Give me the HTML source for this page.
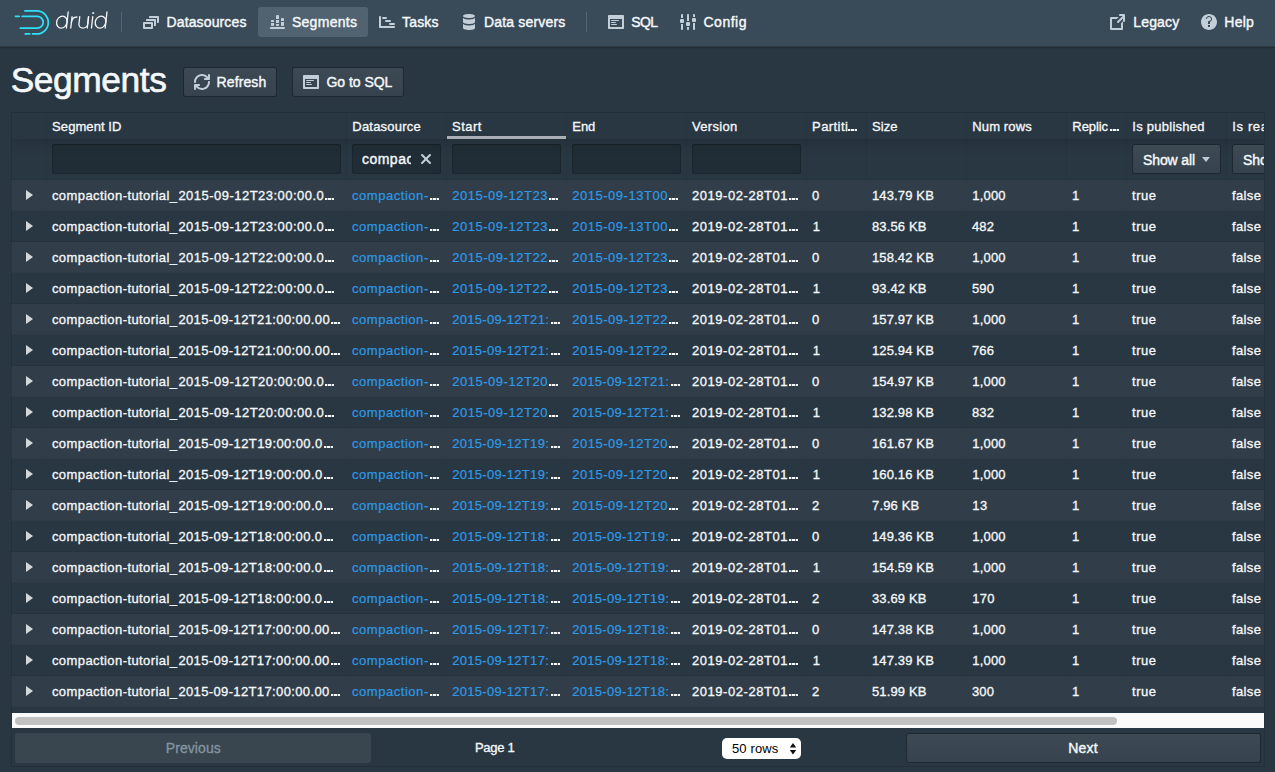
<!DOCTYPE html>
<html lang="en">
<head>
<meta charset="utf-8">
<title>Apache Druid</title>
<style>
*{box-sizing:border-box;margin:0;padding:0}
html,body{width:1275px;height:772px;overflow:hidden;background:#293742;font-family:"Liberation Sans",sans-serif;color:#f5f8fa;font-size:14px}
.abs{position:absolute}
svg{display:block}
.w{-webkit-text-stroke:0.32px #f5f8fa}
.w14{-webkit-text-stroke:.4px #f5f8fa}
.wt{-webkit-text-stroke:.65px #f5f8fa}
.wl{-webkit-text-stroke:.22px #2e99e6}
#nav{position:absolute;left:0;top:0;width:1275px;height:46px;background:#394b59}
#nsh{position:absolute;left:0;top:46px;width:1275px;height:4px;background:linear-gradient(to bottom,#2c3a46 0,#2c3a46 25%,#222d36 25%,#222d36 50%,#26333d 50%,#26333d 75%,#28363f 75%)}
.nb{position:absolute;top:7px;height:30px;border-radius:3px}
.nb.on{background:rgba(138,155,168,.3)}
.vdiv{position:absolute;top:12px;width:1px;height:20px;background:rgba(255,255,255,.15)}
.btn{position:absolute;top:68px;height:28px;border-radius:2px;background-image:linear-gradient(to bottom,#3d4a54,#36434e);box-shadow:0 0 0 1px rgba(16,22,26,.45)}
#tbl{position:absolute;left:11px;top:112px;width:1254px;height:655px;overflow:hidden}
#tbl .bd{position:absolute;left:0;top:0;width:1254px;height:655px;border:1px solid rgba(0,0,0,.12);border-right-color:#25313b;pointer-events:none}
.hd{position:absolute;left:0;top:0;width:1254px;height:27px;box-shadow:0 2px 15px 0 rgba(0,0,0,.15)}
.ft{position:absolute;left:0;top:27px;width:1254px;height:41px;border-bottom:1px solid rgba(0,0,0,.05)}
.row{position:absolute;left:0;width:1254px;height:31px;border-bottom:1px solid rgba(0,0,0,.055)}
.row.odd{background:rgba(255,255,255,.04)}
.cd{position:absolute;top:0;width:1px;background:rgba(0,0,0,.05)}
.inp{position:absolute;top:32px;height:30px;border-radius:3px;background:rgba(16,22,26,.3);box-shadow:inset 0 0 0 1px rgba(16,22,26,.3),inset 0 1px 1px rgba(16,22,26,.4)}
.sel{position:absolute;top:33px;height:28px;border-radius:2px;background-image:linear-gradient(to bottom,#3d4a54,#36434e);box-shadow:0 0 0 1px rgba(16,22,26,.45)}
.e{position:absolute;width:9.2px;height:2px;background:linear-gradient(90deg,#f5f8fa 0,#f5f8fa 2.3px,rgba(245,248,250,.35) 2.3px,rgba(245,248,250,.35) 3.3px,#f5f8fa 3.3px,#f5f8fa 5.6px,rgba(245,248,250,.35) 5.6px,rgba(245,248,250,.35) 6.6px,#f5f8fa 6.6px)}
.tri{position:absolute;left:15px;width:0;height:0;border-top:5px solid transparent;border-bottom:5px solid transparent;border-left:7px solid rgba(255,255,255,.8)}
</style>
</head>
<body>

<div id="nav">
<svg class="abs" style="left:12px;top:6px" width="40" height="32" viewBox="12 6 40 32" fill="none" stroke="#2de0f5" stroke-width="1.75" stroke-linecap="round">
<path d="M25 10.900H36.800A11.500 11.500 0 0 1 36.800 33.900H32.500"/>
<path d="M25.300 33.900H29.600"/>
<path d="M22.200 16.300H37.300A5.900 5.900 0 0 1 37.300 28.100H20.300"/>
<path d="M15.500 16.300H19.200"/>
</svg>
<svg class="abs" style="left:52px;top:6px" width="60" height="30" viewBox="52 6 60 30" fill="none" stroke="#fff" stroke-width="1.3" stroke-linecap="round" opacity=".95">
<g transform="translate(3.09,0) skewX(-6.3)">
<ellipse cx="61.2" cy="22.1" rx="5.2" ry="6"/><path d="M66.4 12V28"/>
<path d="M70.8 16.600V28"/><path d="M70.8 22.500C70.8 19 72.8 17 75.7 17"/>
<path d="M78.500 16.600V23.700A4.400 4.400 0 0 0 87.300 23.700V16.600"/><path d="M87.300 16.600V28"/>
<path d="M91.500 16.600V28"/><circle cx="91.450" cy="13.100" r=".8" fill="#fff" stroke-width=".4"/>
<ellipse cx="99.900" cy="22.100" rx="5.300" ry="6"/><path d="M105.200 12V28"/>
</g></svg>
<div class="vdiv" style="left:121px"></div>
<div class="nb" style="left:133px;width:124px"></div>
<svg class="abs" style="left:143px;top:16px" width="16" height="16" viewBox="0 0 16 16" fill="#c3cfd8"><path d="M9 6H1c-.55 0-1 .45-1 1v5c0 .55.45 1 1 1h8c.55 0 1-.45 1-1V7c0-.55-.45-1-1-1zM8 11H2V8h6v3z"/><path d="M12 3H4c-.55 0-1 .45-1 1v1h8v5h1c.55 0 1-.45 1-1V4c0-.55-.45-1-1-1z"/><path d="M15 0H7c-.55 0-1 .45-1 1v1h8v5h1c.55 0 1-.45 1-1V1c0-.55-.45-1-1-1z"/></svg>
<span class="abs w14" style="left:166.50px;top:7px;line-height:30px;height:30px;font-size:14px;color:#f5f8fa;letter-spacing:0.130px;white-space:pre;">Datasources</span>
<div class="nb on" style="left:258px;width:110px"></div>
<svg class="abs" style="left:269px;top:14px" width="16" height="16" viewBox="0 0 16 16" fill="#c3cfd8"><rect x=".8" y="13" width="15.200" height="2" rx="1"/><path d="M2 7c0-.55.45-1 1-1h1c.55 0 1 .45 1 1v1H2z"/><path d="M2 9h3v2c0 .55-.45 1-1 1H3c-.55 0-1-.45-1-1z"/><path d="M7 2c0-.55.45-1 1-1h1c.55 0 1 .45 1 1v3H7z"/><rect x="7" y="6" width="3" height="3"/><path d="M7 10h3v1c0 .55-.45 1-1 1H8c-.55 0-1-.45-1-1z"/><path d="M12 5c0-.55.45-1 1-1h1c.55 0 1 .45 1 1v2h-3z"/><path d="M12 8h3v3c0 .55-.45 1-1 1h-1c-.55 0-1-.45-1-1z"/></svg>
<span class="abs w14" style="left:291.90px;top:7px;line-height:30px;height:30px;font-size:14px;color:#f5f8fa;letter-spacing:0.300px;white-space:pre;">Segments</span>
<div class="nb" style="left:369px;width:80px"></div>
<svg class="abs" style="left:379px;top:14px" width="16" height="16" viewBox="0 0 16 16" fill="#c3cfd8"><path d="M1 2c-.55 0-1 .45-1 1v10c0 .55.45 1 1 1h14c.55 0 1-.45 1-1s-.45-1-1-1H2V3c0-.55-.45-1-1-1z"/><rect x="3" y="3" width="5" height="2" rx="1"/><rect x="6" y="6" width="6" height="2" rx="1"/><rect x="10" y="9" width="6" height="2" rx="1"/></svg>
<span class="abs w14" style="left:402.10px;top:7px;line-height:30px;height:30px;font-size:14px;color:#f5f8fa;letter-spacing:0.125px;white-space:pre;">Tasks</span>
<div class="nb" style="left:450px;width:125px"></div>
<svg class="abs" style="left:461px;top:14px" width="16" height="16" viewBox="0 0 16 16" fill="#c3cfd8"><path d="M8 4c3.310 0 6-.9 6-2s-2.690-2-6-2C4.680 0 2 .9 2 2s2.680 2 6 2zm-6-.48V8c0 1.100 2.690 2 6 2s6-.9 6-2V3.520c0 1.100-2.690 2-6 2s-6-.9-6-2zm0 6V14c0 1.100 2.690 2 6 2s6-.9 6-2V9.520c0 1.100-2.690 2-6 2s-6-.9-6-2z"/></svg>
<span class="abs w14" style="left:483.90px;top:7px;line-height:30px;height:30px;font-size:14px;color:#f5f8fa;letter-spacing:0.191px;white-space:pre;">Data servers</span>
<div class="vdiv" style="left:586px"></div>
<div class="nb" style="left:598px;width:70px"></div>
<svg class="abs" style="left:608px;top:14px" width="16" height="16" viewBox="0 0 16 16" fill="#c3cfd8"><path d="M3.500 7h7c.28 0 .5-.22.5-.5s-.22-.5-.5-.5h-7c-.28 0-.5.22-.5.5s.22.5.5.5zM15 1H1c-.55 0-1 .45-1 1v12c0 .55.45 1 1 1h14c.55 0 1-.45 1-1V2c0-.55-.45-1-1-1zm-1 12H2V5h12v8zM3.500 9h4c.28 0 .5-.22.5-.5S7.780 8 7.500 8h-4c-.28 0-.5.22-.5.5s.22.5.5.5zm0 2h5c.28 0 .5-.22.5-.5s-.22-.5-.5-.5h-5c-.28 0-.5.22-.5.5s.22.5.5.5z" fill-rule="evenodd"/></svg>
<span class="abs w14" style="left:631.30px;top:7px;line-height:30px;height:30px;font-size:14px;color:#f5f8fa;letter-spacing:-0.650px;white-space:pre;">SQL</span>
<div class="nb" style="left:670px;width:86px"></div>
<svg class="abs" style="left:680px;top:14px" width="16" height="16" viewBox="0 0 16 16" fill="#c3cfd8"><path d="M1 1c0-.55.45-1 1-1s1 .45 1 1v3H1z"/><rect x="0" y="5" width="4" height="4" rx="1"/><path d="M1 10h2v5c0 .55-.45 1-1 1s-1-.45-1-1z"/><path d="M7 1c0-.55.45-1 1-1s1 .45 1 1v6H7z"/><rect x="6" y="8" width="4" height="4" rx="1"/><path d="M7 13h2v2c0 .55-.45 1-1 1s-1-.45-1-1z"/><path d="M13 1c0-.55.45-1 1-1s1 .45 1 1v2h-2z"/><rect x="12" y="4" width="4" height="4" rx="1"/><path d="M13 9h2v6c0 .55-.45 1-1 1s-1-.45-1-1z"/></svg>
<span class="abs w14" style="left:703.50px;top:7px;line-height:30px;height:30px;font-size:14px;color:#f5f8fa;letter-spacing:0.500px;white-space:pre;">Config</span>
<div class="nb" style="left:1100px;width:89px"></div>
<svg class="abs" style="left:1110px;top:14px" width="16" height="16" viewBox="0 0 16 16" fill="#c3cfd8"><path d="M10.990 13.990h-9v-9h4.760l2-2H.990c-.55 0-1 .45-1 1v11c0 .55.45 1 1 1h11c.55 0 1-.45 1-1V7.240l-2 2v4.750zm4-14h-5c-.55 0-1 .45-1 1s.45 1 1 1h2.590L7.290 7.280a1 1 0 0 0-.3.710 1.003 1.003 0 0 0 1.710.71l4.290-4.290V7c0 .55.45 1 1 1s1-.45 1-1V1c0-.56-.45-1.010-1-1.010z" fill-rule="evenodd"/></svg>
<span class="abs w14" style="left:1133.30px;top:7px;line-height:30px;height:30px;font-size:14px;color:#f5f8fa;letter-spacing:0.140px;white-space:pre;">Legacy</span>
<div class="nb" style="left:1191px;width:73px"></div>
<svg class="abs" style="left:1201px;top:14px" width="16" height="16" viewBox="0 0 16 16" fill="#c3cfd8"><path d="M8 0C3.580 0 0 3.580 0 8s3.580 8 8 8 8-3.580 8-8-3.580-8-8-8zM7 13v-2h2v2H7zm2-3.160V10H7V8c0-.55.45-1 1-1 1.100 0 2-.9 2-2s-.9-2-2-2-2 .9-2 2H5c0-1.660 1.340-3 3-3s3 1.340 3 3c0 1.300-.84 2.400-2 2.840z" fill-rule="evenodd"/></svg>
<span class="abs w14" style="left:1224.30px;top:7px;line-height:30px;height:30px;font-size:14px;color:#f5f8fa;letter-spacing:0.233px;white-space:pre;">Help</span>
</div>
<div id="nsh"></div>
<span class="abs wt" style="left:10.70px;top:57px;line-height:46px;height:46px;font-size:35.3px;color:#f5f8fa;letter-spacing:-0.386px;white-space:pre;">Segments</span>
<div class="btn" style="left:184px;width:92px"></div>
<svg class="abs" style="left:194px;top:74px" width="16" height="16" viewBox="0 0 16 16" fill="#c3cfd8"><path d="M14.990 6.990c-.55 0-1 .45-1 1 0 3.310-2.690 6-6 6-1.770 0-3.360-.78-4.460-2h1.460c.55 0 1-.45 1-1s-.45-1-1-1h-4c-.55 0-1 .45-1 1v4c0 .55.45 1 1 1s1-.45 1-1v-1.740a7.950 7.950 0 0 0 6 2.740c4.420 0 8-3.580 8-8 0-.55-.45-1-1-1zm0-7c-.55 0-1 .45-1 1v1.740a7.950 7.950 0 0 0-6-2.740c-4.420 0-8 3.580-8 8 0 .55.45 1 1 1s1-.45 1-1c0-3.310 2.690-6 6-6 1.770 0 3.360.78 4.460 2h-1.460c-.55 0-1 .45-1 1s.45 1 1 1h4c.55 0 1-.45 1-1v-4c0-.55-.45-1-1-1z" fill-rule="evenodd"/></svg>
<span class="abs w14" style="left:216.50px;top:67px;line-height:30px;height:30px;font-size:14px;color:#f5f8fa;letter-spacing:0.117px;white-space:pre;">Refresh</span>
<div class="btn" style="left:293px;width:110px"></div>
<svg class="abs" style="left:303px;top:74px" width="16" height="16" viewBox="0 0 16 16" fill="#c3cfd8"><path d="M3.500 7h7c.28 0 .5-.22.5-.5s-.22-.5-.5-.5h-7c-.28 0-.5.22-.5.5s.22.5.5.5zM15 1H1c-.55 0-1 .45-1 1v12c0 .55.45 1 1 1h14c.55 0 1-.45 1-1V2c0-.55-.45-1-1-1zm-1 12H2V5h12v8zM3.500 9h4c.28 0 .5-.22.5-.5S7.780 8 7.500 8h-4c-.28 0-.5.22-.5.5s.22.5.5.5zm0 2h5c.28 0 .5-.22.5-.5s-.22-.5-.5-.5h-5c-.28 0-.5.22-.5.5s.22.5.5.5z" fill-rule="evenodd"/></svg>
<span class="abs w14" style="left:326.50px;top:67px;line-height:30px;height:30px;font-size:14px;color:#f5f8fa;letter-spacing:-0.038px;white-space:pre;">Go to SQL</span>
<div id="tbl">
<div class="ft"></div>
<div class="hd"></div>
<div class="row odd" style="top:68px">
<div class="tri" style="top:10px"></div>
<span class="abs w" style="left:40.90px;top:1px;line-height:30px;height:30px;font-size:13px;color:#f5f8fa;letter-spacing:0.426px;white-space:pre;">compaction-tutorial_</span><span class="abs w" style="left:167.40px;top:1px;line-height:30px;height:30px;font-size:13px;color:#f5f8fa;letter-spacing:0.475px;white-space:pre;">2015-09-12T23:00:00.0</span><i class="e" style="left:314.3px;top:18px"></i>
<span class="abs wl" style="left:341.00px;top:1px;line-height:30px;height:30px;font-size:13px;color:#2e99e6;letter-spacing:0.540px;white-space:pre;">compaction-</span><i class="e" style="left:418.8px;top:18px"></i>
<span class="abs wl" style="left:441.20px;top:1px;line-height:30px;height:30px;font-size:13px;color:#2e99e6;letter-spacing:0.525px;white-space:pre;">2015-09-12T23</span><i class="e" style="left:537.9px;top:18px"></i>
<span class="abs wl" style="left:561.20px;top:1px;line-height:30px;height:30px;font-size:13px;color:#2e99e6;letter-spacing:0.525px;white-space:pre;">2015-09-13T00</span><i class="e" style="left:657.9px;top:18px"></i>
<span class="abs w" style="left:681.00px;top:1px;line-height:30px;height:30px;font-size:13px;color:#f5f8fa;letter-spacing:0.550px;white-space:pre;">2019-02-28T01</span><i class="e" style="left:778.0px;top:18px"></i>
<span class="abs w" style="left:801.10px;top:1px;line-height:30px;height:30px;font-size:13px;color:#f5f8fa;letter-spacing:0.400px;white-space:pre;">0</span>
<span class="abs w" style="left:861.00px;top:1px;line-height:30px;height:30px;font-size:13px;color:#f5f8fa;letter-spacing:0.137px;white-space:pre;">143.79 KB</span>
<span class="abs w" style="left:961.30px;top:1px;line-height:30px;height:30px;font-size:13px;color:#f5f8fa;letter-spacing:0.175px;white-space:pre;">1,000</span>
<span class="abs w" style="left:1060.90px;top:1px;line-height:30px;height:30px;font-size:13px;color:#f5f8fa;letter-spacing:0.400px;white-space:pre;">1</span>
<span class="abs w" style="left:1121.00px;top:1px;line-height:30px;height:30px;font-size:13px;color:#f5f8fa;letter-spacing:0.550px;white-space:pre;">true</span>
<span class="abs w" style="left:1221.00px;top:1px;line-height:30px;height:30px;font-size:13px;color:#f5f8fa;letter-spacing:0.375px;white-space:pre;">false</span>
</div>
<div class="row" style="top:99px">
<div class="tri" style="top:10px"></div>
<span class="abs w" style="left:40.90px;top:1px;line-height:30px;height:30px;font-size:13px;color:#f5f8fa;letter-spacing:0.426px;white-space:pre;">compaction-tutorial_</span><span class="abs w" style="left:167.40px;top:1px;line-height:30px;height:30px;font-size:13px;color:#f5f8fa;letter-spacing:0.475px;white-space:pre;">2015-09-12T23:00:00.0</span><i class="e" style="left:314.3px;top:18px"></i>
<span class="abs wl" style="left:341.00px;top:1px;line-height:30px;height:30px;font-size:13px;color:#2e99e6;letter-spacing:0.540px;white-space:pre;">compaction-</span><i class="e" style="left:418.8px;top:18px"></i>
<span class="abs wl" style="left:441.20px;top:1px;line-height:30px;height:30px;font-size:13px;color:#2e99e6;letter-spacing:0.525px;white-space:pre;">2015-09-12T23</span><i class="e" style="left:537.9px;top:18px"></i>
<span class="abs wl" style="left:561.20px;top:1px;line-height:30px;height:30px;font-size:13px;color:#2e99e6;letter-spacing:0.525px;white-space:pre;">2015-09-13T00</span><i class="e" style="left:657.9px;top:18px"></i>
<span class="abs w" style="left:681.00px;top:1px;line-height:30px;height:30px;font-size:13px;color:#f5f8fa;letter-spacing:0.550px;white-space:pre;">2019-02-28T01</span><i class="e" style="left:778.0px;top:18px"></i>
<span class="abs w" style="left:801.70px;top:1px;line-height:30px;height:30px;font-size:13px;color:#f5f8fa;letter-spacing:0.400px;white-space:pre;">1</span>
<span class="abs w" style="left:861.00px;top:1px;line-height:30px;height:30px;font-size:13px;color:#f5f8fa;letter-spacing:0.143px;white-space:pre;">83.56 KB</span>
<span class="abs w" style="left:960.90px;top:1px;line-height:30px;height:30px;font-size:13px;color:#f5f8fa;letter-spacing:0.250px;white-space:pre;">482</span>
<span class="abs w" style="left:1060.90px;top:1px;line-height:30px;height:30px;font-size:13px;color:#f5f8fa;letter-spacing:0.400px;white-space:pre;">1</span>
<span class="abs w" style="left:1121.00px;top:1px;line-height:30px;height:30px;font-size:13px;color:#f5f8fa;letter-spacing:0.550px;white-space:pre;">true</span>
<span class="abs w" style="left:1221.00px;top:1px;line-height:30px;height:30px;font-size:13px;color:#f5f8fa;letter-spacing:0.375px;white-space:pre;">false</span>
</div>
<div class="row odd" style="top:130px">
<div class="tri" style="top:10px"></div>
<span class="abs w" style="left:40.90px;top:1px;line-height:30px;height:30px;font-size:13px;color:#f5f8fa;letter-spacing:0.426px;white-space:pre;">compaction-tutorial_</span><span class="abs w" style="left:167.40px;top:1px;line-height:30px;height:30px;font-size:13px;color:#f5f8fa;letter-spacing:0.475px;white-space:pre;">2015-09-12T22:00:00.0</span><i class="e" style="left:314.3px;top:18px"></i>
<span class="abs wl" style="left:341.00px;top:1px;line-height:30px;height:30px;font-size:13px;color:#2e99e6;letter-spacing:0.540px;white-space:pre;">compaction-</span><i class="e" style="left:418.8px;top:18px"></i>
<span class="abs wl" style="left:441.20px;top:1px;line-height:30px;height:30px;font-size:13px;color:#2e99e6;letter-spacing:0.525px;white-space:pre;">2015-09-12T22</span><i class="e" style="left:537.9px;top:18px"></i>
<span class="abs wl" style="left:561.20px;top:1px;line-height:30px;height:30px;font-size:13px;color:#2e99e6;letter-spacing:0.525px;white-space:pre;">2015-09-12T23</span><i class="e" style="left:657.9px;top:18px"></i>
<span class="abs w" style="left:681.00px;top:1px;line-height:30px;height:30px;font-size:13px;color:#f5f8fa;letter-spacing:0.550px;white-space:pre;">2019-02-28T01</span><i class="e" style="left:778.0px;top:18px"></i>
<span class="abs w" style="left:801.10px;top:1px;line-height:30px;height:30px;font-size:13px;color:#f5f8fa;letter-spacing:0.400px;white-space:pre;">0</span>
<span class="abs w" style="left:861.00px;top:1px;line-height:30px;height:30px;font-size:13px;color:#f5f8fa;letter-spacing:0.137px;white-space:pre;">158.42 KB</span>
<span class="abs w" style="left:961.30px;top:1px;line-height:30px;height:30px;font-size:13px;color:#f5f8fa;letter-spacing:0.175px;white-space:pre;">1,000</span>
<span class="abs w" style="left:1060.90px;top:1px;line-height:30px;height:30px;font-size:13px;color:#f5f8fa;letter-spacing:0.400px;white-space:pre;">1</span>
<span class="abs w" style="left:1121.00px;top:1px;line-height:30px;height:30px;font-size:13px;color:#f5f8fa;letter-spacing:0.550px;white-space:pre;">true</span>
<span class="abs w" style="left:1221.00px;top:1px;line-height:30px;height:30px;font-size:13px;color:#f5f8fa;letter-spacing:0.375px;white-space:pre;">false</span>
</div>
<div class="row" style="top:161px">
<div class="tri" style="top:10px"></div>
<span class="abs w" style="left:40.90px;top:1px;line-height:30px;height:30px;font-size:13px;color:#f5f8fa;letter-spacing:0.426px;white-space:pre;">compaction-tutorial_</span><span class="abs w" style="left:167.40px;top:1px;line-height:30px;height:30px;font-size:13px;color:#f5f8fa;letter-spacing:0.475px;white-space:pre;">2015-09-12T22:00:00.0</span><i class="e" style="left:314.3px;top:18px"></i>
<span class="abs wl" style="left:341.00px;top:1px;line-height:30px;height:30px;font-size:13px;color:#2e99e6;letter-spacing:0.540px;white-space:pre;">compaction-</span><i class="e" style="left:418.8px;top:18px"></i>
<span class="abs wl" style="left:441.20px;top:1px;line-height:30px;height:30px;font-size:13px;color:#2e99e6;letter-spacing:0.525px;white-space:pre;">2015-09-12T22</span><i class="e" style="left:537.9px;top:18px"></i>
<span class="abs wl" style="left:561.20px;top:1px;line-height:30px;height:30px;font-size:13px;color:#2e99e6;letter-spacing:0.525px;white-space:pre;">2015-09-12T23</span><i class="e" style="left:657.9px;top:18px"></i>
<span class="abs w" style="left:681.00px;top:1px;line-height:30px;height:30px;font-size:13px;color:#f5f8fa;letter-spacing:0.550px;white-space:pre;">2019-02-28T01</span><i class="e" style="left:778.0px;top:18px"></i>
<span class="abs w" style="left:801.70px;top:1px;line-height:30px;height:30px;font-size:13px;color:#f5f8fa;letter-spacing:0.400px;white-space:pre;">1</span>
<span class="abs w" style="left:861.00px;top:1px;line-height:30px;height:30px;font-size:13px;color:#f5f8fa;letter-spacing:0.143px;white-space:pre;">93.42 KB</span>
<span class="abs w" style="left:960.90px;top:1px;line-height:30px;height:30px;font-size:13px;color:#f5f8fa;letter-spacing:0.250px;white-space:pre;">590</span>
<span class="abs w" style="left:1060.90px;top:1px;line-height:30px;height:30px;font-size:13px;color:#f5f8fa;letter-spacing:0.400px;white-space:pre;">1</span>
<span class="abs w" style="left:1121.00px;top:1px;line-height:30px;height:30px;font-size:13px;color:#f5f8fa;letter-spacing:0.550px;white-space:pre;">true</span>
<span class="abs w" style="left:1221.00px;top:1px;line-height:30px;height:30px;font-size:13px;color:#f5f8fa;letter-spacing:0.375px;white-space:pre;">false</span>
</div>
<div class="row odd" style="top:192px">
<div class="tri" style="top:10px"></div>
<span class="abs w" style="left:40.90px;top:1px;line-height:30px;height:30px;font-size:13px;color:#f5f8fa;letter-spacing:0.426px;white-space:pre;">compaction-tutorial_</span><span class="abs w" style="left:167.40px;top:1px;line-height:30px;height:30px;font-size:13px;color:#f5f8fa;letter-spacing:0.386px;white-space:pre;">2015-09-12T21:00:00.00</span><i class="e" style="left:319.9px;top:18px"></i>
<span class="abs wl" style="left:341.00px;top:1px;line-height:30px;height:30px;font-size:13px;color:#2e99e6;letter-spacing:0.540px;white-space:pre;">compaction-</span><i class="e" style="left:418.8px;top:18px"></i>
<span class="abs wl" style="left:441.20px;top:1px;line-height:30px;height:30px;font-size:13px;color:#2e99e6;letter-spacing:0.315px;white-space:pre;">2015-09-12T21:</span><i class="e" style="left:539.7px;top:18px"></i>
<span class="abs wl" style="left:561.20px;top:1px;line-height:30px;height:30px;font-size:13px;color:#2e99e6;letter-spacing:0.525px;white-space:pre;">2015-09-12T22</span><i class="e" style="left:657.9px;top:18px"></i>
<span class="abs w" style="left:681.00px;top:1px;line-height:30px;height:30px;font-size:13px;color:#f5f8fa;letter-spacing:0.550px;white-space:pre;">2019-02-28T01</span><i class="e" style="left:778.0px;top:18px"></i>
<span class="abs w" style="left:801.10px;top:1px;line-height:30px;height:30px;font-size:13px;color:#f5f8fa;letter-spacing:0.400px;white-space:pre;">0</span>
<span class="abs w" style="left:861.00px;top:1px;line-height:30px;height:30px;font-size:13px;color:#f5f8fa;letter-spacing:0.137px;white-space:pre;">157.97 KB</span>
<span class="abs w" style="left:961.30px;top:1px;line-height:30px;height:30px;font-size:13px;color:#f5f8fa;letter-spacing:0.175px;white-space:pre;">1,000</span>
<span class="abs w" style="left:1060.90px;top:1px;line-height:30px;height:30px;font-size:13px;color:#f5f8fa;letter-spacing:0.400px;white-space:pre;">1</span>
<span class="abs w" style="left:1121.00px;top:1px;line-height:30px;height:30px;font-size:13px;color:#f5f8fa;letter-spacing:0.550px;white-space:pre;">true</span>
<span class="abs w" style="left:1221.00px;top:1px;line-height:30px;height:30px;font-size:13px;color:#f5f8fa;letter-spacing:0.375px;white-space:pre;">false</span>
</div>
<div class="row" style="top:223px">
<div class="tri" style="top:10px"></div>
<span class="abs w" style="left:40.90px;top:1px;line-height:30px;height:30px;font-size:13px;color:#f5f8fa;letter-spacing:0.426px;white-space:pre;">compaction-tutorial_</span><span class="abs w" style="left:167.40px;top:1px;line-height:30px;height:30px;font-size:13px;color:#f5f8fa;letter-spacing:0.386px;white-space:pre;">2015-09-12T21:00:00.00</span><i class="e" style="left:319.9px;top:18px"></i>
<span class="abs wl" style="left:341.00px;top:1px;line-height:30px;height:30px;font-size:13px;color:#2e99e6;letter-spacing:0.540px;white-space:pre;">compaction-</span><i class="e" style="left:418.8px;top:18px"></i>
<span class="abs wl" style="left:441.20px;top:1px;line-height:30px;height:30px;font-size:13px;color:#2e99e6;letter-spacing:0.315px;white-space:pre;">2015-09-12T21:</span><i class="e" style="left:539.7px;top:18px"></i>
<span class="abs wl" style="left:561.20px;top:1px;line-height:30px;height:30px;font-size:13px;color:#2e99e6;letter-spacing:0.525px;white-space:pre;">2015-09-12T22</span><i class="e" style="left:657.9px;top:18px"></i>
<span class="abs w" style="left:681.00px;top:1px;line-height:30px;height:30px;font-size:13px;color:#f5f8fa;letter-spacing:0.550px;white-space:pre;">2019-02-28T01</span><i class="e" style="left:778.0px;top:18px"></i>
<span class="abs w" style="left:801.70px;top:1px;line-height:30px;height:30px;font-size:13px;color:#f5f8fa;letter-spacing:0.400px;white-space:pre;">1</span>
<span class="abs w" style="left:861.00px;top:1px;line-height:30px;height:30px;font-size:13px;color:#f5f8fa;letter-spacing:0.137px;white-space:pre;">125.94 KB</span>
<span class="abs w" style="left:960.90px;top:1px;line-height:30px;height:30px;font-size:13px;color:#f5f8fa;letter-spacing:0.250px;white-space:pre;">766</span>
<span class="abs w" style="left:1060.90px;top:1px;line-height:30px;height:30px;font-size:13px;color:#f5f8fa;letter-spacing:0.400px;white-space:pre;">1</span>
<span class="abs w" style="left:1121.00px;top:1px;line-height:30px;height:30px;font-size:13px;color:#f5f8fa;letter-spacing:0.550px;white-space:pre;">true</span>
<span class="abs w" style="left:1221.00px;top:1px;line-height:30px;height:30px;font-size:13px;color:#f5f8fa;letter-spacing:0.375px;white-space:pre;">false</span>
</div>
<div class="row odd" style="top:254px">
<div class="tri" style="top:10px"></div>
<span class="abs w" style="left:40.90px;top:1px;line-height:30px;height:30px;font-size:13px;color:#f5f8fa;letter-spacing:0.426px;white-space:pre;">compaction-tutorial_</span><span class="abs w" style="left:167.40px;top:1px;line-height:30px;height:30px;font-size:13px;color:#f5f8fa;letter-spacing:0.475px;white-space:pre;">2015-09-12T20:00:00.0</span><i class="e" style="left:314.3px;top:18px"></i>
<span class="abs wl" style="left:341.00px;top:1px;line-height:30px;height:30px;font-size:13px;color:#2e99e6;letter-spacing:0.540px;white-space:pre;">compaction-</span><i class="e" style="left:418.8px;top:18px"></i>
<span class="abs wl" style="left:441.20px;top:1px;line-height:30px;height:30px;font-size:13px;color:#2e99e6;letter-spacing:0.525px;white-space:pre;">2015-09-12T20</span><i class="e" style="left:537.9px;top:18px"></i>
<span class="abs wl" style="left:561.20px;top:1px;line-height:30px;height:30px;font-size:13px;color:#2e99e6;letter-spacing:0.315px;white-space:pre;">2015-09-12T21:</span><i class="e" style="left:659.7px;top:18px"></i>
<span class="abs w" style="left:681.00px;top:1px;line-height:30px;height:30px;font-size:13px;color:#f5f8fa;letter-spacing:0.550px;white-space:pre;">2019-02-28T01</span><i class="e" style="left:778.0px;top:18px"></i>
<span class="abs w" style="left:801.10px;top:1px;line-height:30px;height:30px;font-size:13px;color:#f5f8fa;letter-spacing:0.400px;white-space:pre;">0</span>
<span class="abs w" style="left:861.00px;top:1px;line-height:30px;height:30px;font-size:13px;color:#f5f8fa;letter-spacing:0.137px;white-space:pre;">154.97 KB</span>
<span class="abs w" style="left:961.30px;top:1px;line-height:30px;height:30px;font-size:13px;color:#f5f8fa;letter-spacing:0.175px;white-space:pre;">1,000</span>
<span class="abs w" style="left:1060.90px;top:1px;line-height:30px;height:30px;font-size:13px;color:#f5f8fa;letter-spacing:0.400px;white-space:pre;">1</span>
<span class="abs w" style="left:1121.00px;top:1px;line-height:30px;height:30px;font-size:13px;color:#f5f8fa;letter-spacing:0.550px;white-space:pre;">true</span>
<span class="abs w" style="left:1221.00px;top:1px;line-height:30px;height:30px;font-size:13px;color:#f5f8fa;letter-spacing:0.375px;white-space:pre;">false</span>
</div>
<div class="row" style="top:285px">
<div class="tri" style="top:10px"></div>
<span class="abs w" style="left:40.90px;top:1px;line-height:30px;height:30px;font-size:13px;color:#f5f8fa;letter-spacing:0.426px;white-space:pre;">compaction-tutorial_</span><span class="abs w" style="left:167.40px;top:1px;line-height:30px;height:30px;font-size:13px;color:#f5f8fa;letter-spacing:0.475px;white-space:pre;">2015-09-12T20:00:00.0</span><i class="e" style="left:314.3px;top:18px"></i>
<span class="abs wl" style="left:341.00px;top:1px;line-height:30px;height:30px;font-size:13px;color:#2e99e6;letter-spacing:0.540px;white-space:pre;">compaction-</span><i class="e" style="left:418.8px;top:18px"></i>
<span class="abs wl" style="left:441.20px;top:1px;line-height:30px;height:30px;font-size:13px;color:#2e99e6;letter-spacing:0.525px;white-space:pre;">2015-09-12T20</span><i class="e" style="left:537.9px;top:18px"></i>
<span class="abs wl" style="left:561.20px;top:1px;line-height:30px;height:30px;font-size:13px;color:#2e99e6;letter-spacing:0.315px;white-space:pre;">2015-09-12T21:</span><i class="e" style="left:659.7px;top:18px"></i>
<span class="abs w" style="left:681.00px;top:1px;line-height:30px;height:30px;font-size:13px;color:#f5f8fa;letter-spacing:0.550px;white-space:pre;">2019-02-28T01</span><i class="e" style="left:778.0px;top:18px"></i>
<span class="abs w" style="left:801.70px;top:1px;line-height:30px;height:30px;font-size:13px;color:#f5f8fa;letter-spacing:0.400px;white-space:pre;">1</span>
<span class="abs w" style="left:861.00px;top:1px;line-height:30px;height:30px;font-size:13px;color:#f5f8fa;letter-spacing:0.137px;white-space:pre;">132.98 KB</span>
<span class="abs w" style="left:960.90px;top:1px;line-height:30px;height:30px;font-size:13px;color:#f5f8fa;letter-spacing:0.250px;white-space:pre;">832</span>
<span class="abs w" style="left:1060.90px;top:1px;line-height:30px;height:30px;font-size:13px;color:#f5f8fa;letter-spacing:0.400px;white-space:pre;">1</span>
<span class="abs w" style="left:1121.00px;top:1px;line-height:30px;height:30px;font-size:13px;color:#f5f8fa;letter-spacing:0.550px;white-space:pre;">true</span>
<span class="abs w" style="left:1221.00px;top:1px;line-height:30px;height:30px;font-size:13px;color:#f5f8fa;letter-spacing:0.375px;white-space:pre;">false</span>
</div>
<div class="row odd" style="top:316px">
<div class="tri" style="top:10px"></div>
<span class="abs w" style="left:40.90px;top:1px;line-height:30px;height:30px;font-size:13px;color:#f5f8fa;letter-spacing:0.426px;white-space:pre;">compaction-tutorial_</span><span class="abs w" style="left:167.40px;top:1px;line-height:30px;height:30px;font-size:13px;color:#f5f8fa;letter-spacing:0.395px;white-space:pre;">2015-09-12T19:00:00.0</span><i class="e" style="left:312.7px;top:18px"></i>
<span class="abs wl" style="left:341.00px;top:1px;line-height:30px;height:30px;font-size:13px;color:#2e99e6;letter-spacing:0.540px;white-space:pre;">compaction-</span><i class="e" style="left:418.8px;top:18px"></i>
<span class="abs wl" style="left:441.20px;top:1px;line-height:30px;height:30px;font-size:13px;color:#2e99e6;letter-spacing:0.315px;white-space:pre;">2015-09-12T19:</span><i class="e" style="left:539.7px;top:18px"></i>
<span class="abs wl" style="left:561.20px;top:1px;line-height:30px;height:30px;font-size:13px;color:#2e99e6;letter-spacing:0.525px;white-space:pre;">2015-09-12T20</span><i class="e" style="left:657.9px;top:18px"></i>
<span class="abs w" style="left:681.00px;top:1px;line-height:30px;height:30px;font-size:13px;color:#f5f8fa;letter-spacing:0.550px;white-space:pre;">2019-02-28T01</span><i class="e" style="left:778.0px;top:18px"></i>
<span class="abs w" style="left:801.10px;top:1px;line-height:30px;height:30px;font-size:13px;color:#f5f8fa;letter-spacing:0.400px;white-space:pre;">0</span>
<span class="abs w" style="left:861.00px;top:1px;line-height:30px;height:30px;font-size:13px;color:#f5f8fa;letter-spacing:0.137px;white-space:pre;">161.67 KB</span>
<span class="abs w" style="left:961.30px;top:1px;line-height:30px;height:30px;font-size:13px;color:#f5f8fa;letter-spacing:0.175px;white-space:pre;">1,000</span>
<span class="abs w" style="left:1060.90px;top:1px;line-height:30px;height:30px;font-size:13px;color:#f5f8fa;letter-spacing:0.400px;white-space:pre;">1</span>
<span class="abs w" style="left:1121.00px;top:1px;line-height:30px;height:30px;font-size:13px;color:#f5f8fa;letter-spacing:0.550px;white-space:pre;">true</span>
<span class="abs w" style="left:1221.00px;top:1px;line-height:30px;height:30px;font-size:13px;color:#f5f8fa;letter-spacing:0.375px;white-space:pre;">false</span>
</div>
<div class="row" style="top:347px">
<div class="tri" style="top:10px"></div>
<span class="abs w" style="left:40.90px;top:1px;line-height:30px;height:30px;font-size:13px;color:#f5f8fa;letter-spacing:0.426px;white-space:pre;">compaction-tutorial_</span><span class="abs w" style="left:167.40px;top:1px;line-height:30px;height:30px;font-size:13px;color:#f5f8fa;letter-spacing:0.395px;white-space:pre;">2015-09-12T19:00:00.0</span><i class="e" style="left:312.7px;top:18px"></i>
<span class="abs wl" style="left:341.00px;top:1px;line-height:30px;height:30px;font-size:13px;color:#2e99e6;letter-spacing:0.540px;white-space:pre;">compaction-</span><i class="e" style="left:418.8px;top:18px"></i>
<span class="abs wl" style="left:441.20px;top:1px;line-height:30px;height:30px;font-size:13px;color:#2e99e6;letter-spacing:0.315px;white-space:pre;">2015-09-12T19:</span><i class="e" style="left:539.7px;top:18px"></i>
<span class="abs wl" style="left:561.20px;top:1px;line-height:30px;height:30px;font-size:13px;color:#2e99e6;letter-spacing:0.525px;white-space:pre;">2015-09-12T20</span><i class="e" style="left:657.9px;top:18px"></i>
<span class="abs w" style="left:681.00px;top:1px;line-height:30px;height:30px;font-size:13px;color:#f5f8fa;letter-spacing:0.550px;white-space:pre;">2019-02-28T01</span><i class="e" style="left:778.0px;top:18px"></i>
<span class="abs w" style="left:801.70px;top:1px;line-height:30px;height:30px;font-size:13px;color:#f5f8fa;letter-spacing:0.400px;white-space:pre;">1</span>
<span class="abs w" style="left:861.00px;top:1px;line-height:30px;height:30px;font-size:13px;color:#f5f8fa;letter-spacing:0.137px;white-space:pre;">160.16 KB</span>
<span class="abs w" style="left:961.30px;top:1px;line-height:30px;height:30px;font-size:13px;color:#f5f8fa;letter-spacing:0.175px;white-space:pre;">1,000</span>
<span class="abs w" style="left:1060.90px;top:1px;line-height:30px;height:30px;font-size:13px;color:#f5f8fa;letter-spacing:0.400px;white-space:pre;">1</span>
<span class="abs w" style="left:1121.00px;top:1px;line-height:30px;height:30px;font-size:13px;color:#f5f8fa;letter-spacing:0.550px;white-space:pre;">true</span>
<span class="abs w" style="left:1221.00px;top:1px;line-height:30px;height:30px;font-size:13px;color:#f5f8fa;letter-spacing:0.375px;white-space:pre;">false</span>
</div>
<div class="row odd" style="top:378px">
<div class="tri" style="top:10px"></div>
<span class="abs w" style="left:40.90px;top:1px;line-height:30px;height:30px;font-size:13px;color:#f5f8fa;letter-spacing:0.426px;white-space:pre;">compaction-tutorial_</span><span class="abs w" style="left:167.40px;top:1px;line-height:30px;height:30px;font-size:13px;color:#f5f8fa;letter-spacing:0.395px;white-space:pre;">2015-09-12T19:00:00.0</span><i class="e" style="left:312.7px;top:18px"></i>
<span class="abs wl" style="left:341.00px;top:1px;line-height:30px;height:30px;font-size:13px;color:#2e99e6;letter-spacing:0.540px;white-space:pre;">compaction-</span><i class="e" style="left:418.8px;top:18px"></i>
<span class="abs wl" style="left:441.20px;top:1px;line-height:30px;height:30px;font-size:13px;color:#2e99e6;letter-spacing:0.315px;white-space:pre;">2015-09-12T19:</span><i class="e" style="left:539.7px;top:18px"></i>
<span class="abs wl" style="left:561.20px;top:1px;line-height:30px;height:30px;font-size:13px;color:#2e99e6;letter-spacing:0.525px;white-space:pre;">2015-09-12T20</span><i class="e" style="left:657.9px;top:18px"></i>
<span class="abs w" style="left:681.00px;top:1px;line-height:30px;height:30px;font-size:13px;color:#f5f8fa;letter-spacing:0.550px;white-space:pre;">2019-02-28T01</span><i class="e" style="left:778.0px;top:18px"></i>
<span class="abs w" style="left:801.10px;top:1px;line-height:30px;height:30px;font-size:13px;color:#f5f8fa;letter-spacing:0.400px;white-space:pre;">2</span>
<span class="abs w" style="left:861.00px;top:1px;line-height:30px;height:30px;font-size:13px;color:#f5f8fa;letter-spacing:0.150px;white-space:pre;">7.96 KB</span>
<span class="abs w" style="left:961.30px;top:1px;line-height:30px;height:30px;font-size:13px;color:#f5f8fa;letter-spacing:0.400px;white-space:pre;">13</span>
<span class="abs w" style="left:1060.90px;top:1px;line-height:30px;height:30px;font-size:13px;color:#f5f8fa;letter-spacing:0.400px;white-space:pre;">1</span>
<span class="abs w" style="left:1121.00px;top:1px;line-height:30px;height:30px;font-size:13px;color:#f5f8fa;letter-spacing:0.550px;white-space:pre;">true</span>
<span class="abs w" style="left:1221.00px;top:1px;line-height:30px;height:30px;font-size:13px;color:#f5f8fa;letter-spacing:0.375px;white-space:pre;">false</span>
</div>
<div class="row" style="top:409px">
<div class="tri" style="top:10px"></div>
<span class="abs w" style="left:40.90px;top:1px;line-height:30px;height:30px;font-size:13px;color:#f5f8fa;letter-spacing:0.426px;white-space:pre;">compaction-tutorial_</span><span class="abs w" style="left:167.40px;top:1px;line-height:30px;height:30px;font-size:13px;color:#f5f8fa;letter-spacing:0.385px;white-space:pre;">2015-09-12T18:00:00.0</span><i class="e" style="left:312.5px;top:18px"></i>
<span class="abs wl" style="left:341.00px;top:1px;line-height:30px;height:30px;font-size:13px;color:#2e99e6;letter-spacing:0.540px;white-space:pre;">compaction-</span><i class="e" style="left:418.8px;top:18px"></i>
<span class="abs wl" style="left:441.20px;top:1px;line-height:30px;height:30px;font-size:13px;color:#2e99e6;letter-spacing:0.315px;white-space:pre;">2015-09-12T18:</span><i class="e" style="left:539.7px;top:18px"></i>
<span class="abs wl" style="left:561.20px;top:1px;line-height:30px;height:30px;font-size:13px;color:#2e99e6;letter-spacing:0.315px;white-space:pre;">2015-09-12T19:</span><i class="e" style="left:659.7px;top:18px"></i>
<span class="abs w" style="left:681.00px;top:1px;line-height:30px;height:30px;font-size:13px;color:#f5f8fa;letter-spacing:0.550px;white-space:pre;">2019-02-28T01</span><i class="e" style="left:778.0px;top:18px"></i>
<span class="abs w" style="left:801.10px;top:1px;line-height:30px;height:30px;font-size:13px;color:#f5f8fa;letter-spacing:0.400px;white-space:pre;">0</span>
<span class="abs w" style="left:861.00px;top:1px;line-height:30px;height:30px;font-size:13px;color:#f5f8fa;letter-spacing:0.137px;white-space:pre;">149.36 KB</span>
<span class="abs w" style="left:961.30px;top:1px;line-height:30px;height:30px;font-size:13px;color:#f5f8fa;letter-spacing:0.175px;white-space:pre;">1,000</span>
<span class="abs w" style="left:1060.90px;top:1px;line-height:30px;height:30px;font-size:13px;color:#f5f8fa;letter-spacing:0.400px;white-space:pre;">1</span>
<span class="abs w" style="left:1121.00px;top:1px;line-height:30px;height:30px;font-size:13px;color:#f5f8fa;letter-spacing:0.550px;white-space:pre;">true</span>
<span class="abs w" style="left:1221.00px;top:1px;line-height:30px;height:30px;font-size:13px;color:#f5f8fa;letter-spacing:0.375px;white-space:pre;">false</span>
</div>
<div class="row odd" style="top:440px">
<div class="tri" style="top:10px"></div>
<span class="abs w" style="left:40.90px;top:1px;line-height:30px;height:30px;font-size:13px;color:#f5f8fa;letter-spacing:0.426px;white-space:pre;">compaction-tutorial_</span><span class="abs w" style="left:167.40px;top:1px;line-height:30px;height:30px;font-size:13px;color:#f5f8fa;letter-spacing:0.385px;white-space:pre;">2015-09-12T18:00:00.0</span><i class="e" style="left:312.5px;top:18px"></i>
<span class="abs wl" style="left:341.00px;top:1px;line-height:30px;height:30px;font-size:13px;color:#2e99e6;letter-spacing:0.540px;white-space:pre;">compaction-</span><i class="e" style="left:418.8px;top:18px"></i>
<span class="abs wl" style="left:441.20px;top:1px;line-height:30px;height:30px;font-size:13px;color:#2e99e6;letter-spacing:0.315px;white-space:pre;">2015-09-12T18:</span><i class="e" style="left:539.7px;top:18px"></i>
<span class="abs wl" style="left:561.20px;top:1px;line-height:30px;height:30px;font-size:13px;color:#2e99e6;letter-spacing:0.315px;white-space:pre;">2015-09-12T19:</span><i class="e" style="left:659.7px;top:18px"></i>
<span class="abs w" style="left:681.00px;top:1px;line-height:30px;height:30px;font-size:13px;color:#f5f8fa;letter-spacing:0.550px;white-space:pre;">2019-02-28T01</span><i class="e" style="left:778.0px;top:18px"></i>
<span class="abs w" style="left:801.70px;top:1px;line-height:30px;height:30px;font-size:13px;color:#f5f8fa;letter-spacing:0.400px;white-space:pre;">1</span>
<span class="abs w" style="left:861.00px;top:1px;line-height:30px;height:30px;font-size:13px;color:#f5f8fa;letter-spacing:0.137px;white-space:pre;">154.59 KB</span>
<span class="abs w" style="left:961.30px;top:1px;line-height:30px;height:30px;font-size:13px;color:#f5f8fa;letter-spacing:0.175px;white-space:pre;">1,000</span>
<span class="abs w" style="left:1060.90px;top:1px;line-height:30px;height:30px;font-size:13px;color:#f5f8fa;letter-spacing:0.400px;white-space:pre;">1</span>
<span class="abs w" style="left:1121.00px;top:1px;line-height:30px;height:30px;font-size:13px;color:#f5f8fa;letter-spacing:0.550px;white-space:pre;">true</span>
<span class="abs w" style="left:1221.00px;top:1px;line-height:30px;height:30px;font-size:13px;color:#f5f8fa;letter-spacing:0.375px;white-space:pre;">false</span>
</div>
<div class="row" style="top:471px">
<div class="tri" style="top:10px"></div>
<span class="abs w" style="left:40.90px;top:1px;line-height:30px;height:30px;font-size:13px;color:#f5f8fa;letter-spacing:0.426px;white-space:pre;">compaction-tutorial_</span><span class="abs w" style="left:167.40px;top:1px;line-height:30px;height:30px;font-size:13px;color:#f5f8fa;letter-spacing:0.385px;white-space:pre;">2015-09-12T18:00:00.0</span><i class="e" style="left:312.5px;top:18px"></i>
<span class="abs wl" style="left:341.00px;top:1px;line-height:30px;height:30px;font-size:13px;color:#2e99e6;letter-spacing:0.540px;white-space:pre;">compaction-</span><i class="e" style="left:418.8px;top:18px"></i>
<span class="abs wl" style="left:441.20px;top:1px;line-height:30px;height:30px;font-size:13px;color:#2e99e6;letter-spacing:0.315px;white-space:pre;">2015-09-12T18:</span><i class="e" style="left:539.7px;top:18px"></i>
<span class="abs wl" style="left:561.20px;top:1px;line-height:30px;height:30px;font-size:13px;color:#2e99e6;letter-spacing:0.315px;white-space:pre;">2015-09-12T19:</span><i class="e" style="left:659.7px;top:18px"></i>
<span class="abs w" style="left:681.00px;top:1px;line-height:30px;height:30px;font-size:13px;color:#f5f8fa;letter-spacing:0.550px;white-space:pre;">2019-02-28T01</span><i class="e" style="left:778.0px;top:18px"></i>
<span class="abs w" style="left:801.10px;top:1px;line-height:30px;height:30px;font-size:13px;color:#f5f8fa;letter-spacing:0.400px;white-space:pre;">2</span>
<span class="abs w" style="left:861.00px;top:1px;line-height:30px;height:30px;font-size:13px;color:#f5f8fa;letter-spacing:0.143px;white-space:pre;">33.69 KB</span>
<span class="abs w" style="left:961.30px;top:1px;line-height:30px;height:30px;font-size:13px;color:#f5f8fa;letter-spacing:0.250px;white-space:pre;">170</span>
<span class="abs w" style="left:1060.90px;top:1px;line-height:30px;height:30px;font-size:13px;color:#f5f8fa;letter-spacing:0.400px;white-space:pre;">1</span>
<span class="abs w" style="left:1121.00px;top:1px;line-height:30px;height:30px;font-size:13px;color:#f5f8fa;letter-spacing:0.550px;white-space:pre;">true</span>
<span class="abs w" style="left:1221.00px;top:1px;line-height:30px;height:30px;font-size:13px;color:#f5f8fa;letter-spacing:0.375px;white-space:pre;">false</span>
</div>
<div class="row odd" style="top:502px">
<div class="tri" style="top:10px"></div>
<span class="abs w" style="left:40.90px;top:1px;line-height:30px;height:30px;font-size:13px;color:#f5f8fa;letter-spacing:0.426px;white-space:pre;">compaction-tutorial_</span><span class="abs w" style="left:167.40px;top:1px;line-height:30px;height:30px;font-size:13px;color:#f5f8fa;letter-spacing:0.367px;white-space:pre;">2015-09-12T17:00:00.00</span><i class="e" style="left:319.5px;top:18px"></i>
<span class="abs wl" style="left:341.00px;top:1px;line-height:30px;height:30px;font-size:13px;color:#2e99e6;letter-spacing:0.540px;white-space:pre;">compaction-</span><i class="e" style="left:418.8px;top:18px"></i>
<span class="abs wl" style="left:441.20px;top:1px;line-height:30px;height:30px;font-size:13px;color:#2e99e6;letter-spacing:0.315px;white-space:pre;">2015-09-12T17:</span><i class="e" style="left:539.7px;top:18px"></i>
<span class="abs wl" style="left:561.20px;top:1px;line-height:30px;height:30px;font-size:13px;color:#2e99e6;letter-spacing:0.315px;white-space:pre;">2015-09-12T18:</span><i class="e" style="left:659.7px;top:18px"></i>
<span class="abs w" style="left:681.00px;top:1px;line-height:30px;height:30px;font-size:13px;color:#f5f8fa;letter-spacing:0.550px;white-space:pre;">2019-02-28T01</span><i class="e" style="left:778.0px;top:18px"></i>
<span class="abs w" style="left:801.10px;top:1px;line-height:30px;height:30px;font-size:13px;color:#f5f8fa;letter-spacing:0.400px;white-space:pre;">0</span>
<span class="abs w" style="left:861.00px;top:1px;line-height:30px;height:30px;font-size:13px;color:#f5f8fa;letter-spacing:0.137px;white-space:pre;">147.38 KB</span>
<span class="abs w" style="left:961.30px;top:1px;line-height:30px;height:30px;font-size:13px;color:#f5f8fa;letter-spacing:0.175px;white-space:pre;">1,000</span>
<span class="abs w" style="left:1060.90px;top:1px;line-height:30px;height:30px;font-size:13px;color:#f5f8fa;letter-spacing:0.400px;white-space:pre;">1</span>
<span class="abs w" style="left:1121.00px;top:1px;line-height:30px;height:30px;font-size:13px;color:#f5f8fa;letter-spacing:0.550px;white-space:pre;">true</span>
<span class="abs w" style="left:1221.00px;top:1px;line-height:30px;height:30px;font-size:13px;color:#f5f8fa;letter-spacing:0.375px;white-space:pre;">false</span>
</div>
<div class="row" style="top:533px">
<div class="tri" style="top:10px"></div>
<span class="abs w" style="left:40.90px;top:1px;line-height:30px;height:30px;font-size:13px;color:#f5f8fa;letter-spacing:0.426px;white-space:pre;">compaction-tutorial_</span><span class="abs w" style="left:167.40px;top:1px;line-height:30px;height:30px;font-size:13px;color:#f5f8fa;letter-spacing:0.367px;white-space:pre;">2015-09-12T17:00:00.00</span><i class="e" style="left:319.5px;top:18px"></i>
<span class="abs wl" style="left:341.00px;top:1px;line-height:30px;height:30px;font-size:13px;color:#2e99e6;letter-spacing:0.540px;white-space:pre;">compaction-</span><i class="e" style="left:418.8px;top:18px"></i>
<span class="abs wl" style="left:441.20px;top:1px;line-height:30px;height:30px;font-size:13px;color:#2e99e6;letter-spacing:0.315px;white-space:pre;">2015-09-12T17:</span><i class="e" style="left:539.7px;top:18px"></i>
<span class="abs wl" style="left:561.20px;top:1px;line-height:30px;height:30px;font-size:13px;color:#2e99e6;letter-spacing:0.315px;white-space:pre;">2015-09-12T18:</span><i class="e" style="left:659.7px;top:18px"></i>
<span class="abs w" style="left:681.00px;top:1px;line-height:30px;height:30px;font-size:13px;color:#f5f8fa;letter-spacing:0.550px;white-space:pre;">2019-02-28T01</span><i class="e" style="left:778.0px;top:18px"></i>
<span class="abs w" style="left:801.70px;top:1px;line-height:30px;height:30px;font-size:13px;color:#f5f8fa;letter-spacing:0.400px;white-space:pre;">1</span>
<span class="abs w" style="left:861.00px;top:1px;line-height:30px;height:30px;font-size:13px;color:#f5f8fa;letter-spacing:0.137px;white-space:pre;">147.39 KB</span>
<span class="abs w" style="left:961.30px;top:1px;line-height:30px;height:30px;font-size:13px;color:#f5f8fa;letter-spacing:0.175px;white-space:pre;">1,000</span>
<span class="abs w" style="left:1060.90px;top:1px;line-height:30px;height:30px;font-size:13px;color:#f5f8fa;letter-spacing:0.400px;white-space:pre;">1</span>
<span class="abs w" style="left:1121.00px;top:1px;line-height:30px;height:30px;font-size:13px;color:#f5f8fa;letter-spacing:0.550px;white-space:pre;">true</span>
<span class="abs w" style="left:1221.00px;top:1px;line-height:30px;height:30px;font-size:13px;color:#f5f8fa;letter-spacing:0.375px;white-space:pre;">false</span>
</div>
<div class="row odd" style="top:564px">
<div class="tri" style="top:10px"></div>
<span class="abs w" style="left:40.90px;top:1px;line-height:30px;height:30px;font-size:13px;color:#f5f8fa;letter-spacing:0.426px;white-space:pre;">compaction-tutorial_</span><span class="abs w" style="left:167.40px;top:1px;line-height:30px;height:30px;font-size:13px;color:#f5f8fa;letter-spacing:0.367px;white-space:pre;">2015-09-12T17:00:00.00</span><i class="e" style="left:319.5px;top:18px"></i>
<span class="abs wl" style="left:341.00px;top:1px;line-height:30px;height:30px;font-size:13px;color:#2e99e6;letter-spacing:0.540px;white-space:pre;">compaction-</span><i class="e" style="left:418.8px;top:18px"></i>
<span class="abs wl" style="left:441.20px;top:1px;line-height:30px;height:30px;font-size:13px;color:#2e99e6;letter-spacing:0.315px;white-space:pre;">2015-09-12T17:</span><i class="e" style="left:539.7px;top:18px"></i>
<span class="abs wl" style="left:561.20px;top:1px;line-height:30px;height:30px;font-size:13px;color:#2e99e6;letter-spacing:0.315px;white-space:pre;">2015-09-12T18:</span><i class="e" style="left:659.7px;top:18px"></i>
<span class="abs w" style="left:681.00px;top:1px;line-height:30px;height:30px;font-size:13px;color:#f5f8fa;letter-spacing:0.550px;white-space:pre;">2019-02-28T01</span><i class="e" style="left:778.0px;top:18px"></i>
<span class="abs w" style="left:801.10px;top:1px;line-height:30px;height:30px;font-size:13px;color:#f5f8fa;letter-spacing:0.400px;white-space:pre;">2</span>
<span class="abs w" style="left:861.00px;top:1px;line-height:30px;height:30px;font-size:13px;color:#f5f8fa;letter-spacing:0.143px;white-space:pre;">51.99 KB</span>
<span class="abs w" style="left:960.90px;top:1px;line-height:30px;height:30px;font-size:13px;color:#f5f8fa;letter-spacing:0.250px;white-space:pre;">300</span>
<span class="abs w" style="left:1060.90px;top:1px;line-height:30px;height:30px;font-size:13px;color:#f5f8fa;letter-spacing:0.400px;white-space:pre;">1</span>
<span class="abs w" style="left:1121.00px;top:1px;line-height:30px;height:30px;font-size:13px;color:#f5f8fa;letter-spacing:0.550px;white-space:pre;">true</span>
<span class="abs w" style="left:1221.00px;top:1px;line-height:30px;height:30px;font-size:13px;color:#f5f8fa;letter-spacing:0.375px;white-space:pre;">false</span>
</div>
<div class="cd" style="left:35px;height:68px"></div>
<div class="cd" style="left:35px;top:68px;height:527px;background:rgba(0,0,0,.012)"></div>
<div class="cd" style="left:335px;height:68px"></div>
<div class="cd" style="left:335px;top:68px;height:527px;background:rgba(0,0,0,.012)"></div>
<div class="cd" style="left:435px;height:68px"></div>
<div class="cd" style="left:435px;top:68px;height:527px;background:rgba(0,0,0,.012)"></div>
<div class="cd" style="left:555px;height:68px"></div>
<div class="cd" style="left:555px;top:68px;height:527px;background:rgba(0,0,0,.012)"></div>
<div class="cd" style="left:675px;height:68px"></div>
<div class="cd" style="left:675px;top:68px;height:527px;background:rgba(0,0,0,.012)"></div>
<div class="cd" style="left:795px;height:68px"></div>
<div class="cd" style="left:795px;top:68px;height:527px;background:rgba(0,0,0,.012)"></div>
<div class="cd" style="left:855px;height:68px"></div>
<div class="cd" style="left:855px;top:68px;height:527px;background:rgba(0,0,0,.012)"></div>
<div class="cd" style="left:955px;height:68px"></div>
<div class="cd" style="left:955px;top:68px;height:527px;background:rgba(0,0,0,.012)"></div>
<div class="cd" style="left:1055px;height:68px"></div>
<div class="cd" style="left:1055px;top:68px;height:527px;background:rgba(0,0,0,.012)"></div>
<div class="cd" style="left:1115px;height:68px"></div>
<div class="cd" style="left:1115px;top:68px;height:527px;background:rgba(0,0,0,.012)"></div>
<div class="cd" style="left:1215px;height:68px"></div>
<div class="cd" style="left:1215px;top:68px;height:527px;background:rgba(0,0,0,.012)"></div>
<span class="abs w" style="left:41.10px;top:1px;line-height:27px;height:27px;font-size:13px;color:#f5f8fa;letter-spacing:0.078px;white-space:pre;">Segment ID</span>
<span class="abs w" style="left:341.30px;top:1px;line-height:27px;height:27px;font-size:13px;color:#f5f8fa;letter-spacing:0.211px;white-space:pre;">Datasource</span>
<span class="abs w" style="left:441.10px;top:1px;line-height:27px;height:27px;font-size:13px;color:#f5f8fa;letter-spacing:0.425px;white-space:pre;">Start</span>
<span class="abs w" style="left:561.30px;top:1px;line-height:27px;height:27px;font-size:13px;color:#f5f8fa;letter-spacing:-0.050px;white-space:pre;">End</span>
<span class="abs w" style="left:681.00px;top:1px;line-height:27px;height:27px;font-size:13px;color:#f5f8fa;letter-spacing:0.300px;white-space:pre;">Version</span>
<span class="abs w" style="left:801.10px;top:1px;line-height:27px;height:27px;font-size:13px;color:#f5f8fa;letter-spacing:0.417px;white-space:pre;">Partiti</span>
<i class="e" style="left:837.3px;top:17px"></i>
<span class="abs w" style="left:861.10px;top:1px;line-height:27px;height:27px;font-size:13px;color:#f5f8fa;letter-spacing:0.033px;white-space:pre;">Size</span>
<span class="abs w" style="left:961.30px;top:1px;line-height:27px;height:27px;font-size:13px;color:#f5f8fa;letter-spacing:0.129px;white-space:pre;">Num rows</span>
<span class="abs w" style="left:1061.30px;top:1px;line-height:27px;height:27px;font-size:13px;color:#f5f8fa;letter-spacing:-0.060px;white-space:pre;">Replic</span>
<i class="e" style="left:1098.7px;top:17px"></i>
<span class="abs w" style="left:1121.30px;top:1px;line-height:27px;height:27px;font-size:13px;color:#f5f8fa;letter-spacing:0.264px;white-space:pre;">Is published</span>
<span class="abs w" style="left:1221.30px;top:1px;line-height:27px;height:27px;font-size:13px;color:#f5f8fa;letter-spacing:0.630px;white-space:pre;">Is realtime</span>
<div class="abs" style="left:436px;top:24px;width:119px;height:3px;background:rgba(255,255,255,.6)"></div>
<div class="inp" style="left:41px;width:289px"></div>
<div class="inp" style="left:341px;width:89px"></div>
<div class="inp" style="left:441px;width:109px"></div>
<div class="inp" style="left:561px;width:109px"></div>
<div class="inp" style="left:681px;width:109px"></div>
<div class="abs" style="left:341px;top:32px;width:59px;height:30px;overflow:hidden"><span class="abs w14" style="left:9.90px;top:0px;line-height:30px;height:30px;font-size:14px;color:#f5f8fa;letter-spacing:0.000px;white-space:pre;letter-spacing:.5px;">compact</span></div>
<svg class="abs" style="left:407px;top:39px" width="16" height="16" viewBox="0 0 16 16" fill="#c3cfd8"><path d="M9.410 8l3.290-3.290c.19-.18.3-.43.3-.71a1.003 1.003 0 0 0-1.710-.71L8 6.590l-3.290-3.300a1.003 1.003 0 0 0-1.420 1.420L6.590 8 3.300 11.290c-.19.18-.3.43-.3.710a1.003 1.003 0 0 0 1.710.71L8 9.410l3.290 3.290c.18.19.43.3.71.3a1.003 1.003 0 0 0 .71-1.710L9.410 8z" fill-rule="evenodd"/></svg>
<div class="sel" style="left:1122px;width:87px"></div>
<span class="abs w14" style="left:1132.10px;top:33px;line-height:30px;height:30px;font-size:14px;color:#f5f8fa;letter-spacing:-0.129px;white-space:pre;">Show all</span>
<div class="abs" style="left:1190.5px;top:45px;width:0;height:0;border-left:4.500px solid transparent;border-right:4.500px solid transparent;border-top:5px solid #bfccd6"></div>
<div class="sel" style="left:1222px;width:86px"></div>
<span class="abs w14" style="left:1232.10px;top:33px;line-height:30px;height:30px;font-size:14px;color:#f5f8fa;letter-spacing:-0.129px;white-space:pre;">Show all</span>
<div class="abs" style="left:1px;top:601px;width:1252px;height:15px;background:#fafafa"></div>
<div class="abs" style="left:4px;top:605px;width:1102px;height:8px;border-radius:4px;background:#c1c1c1"></div>
<div class="abs" style="left:4px;top:621px;width:356px;height:30px;border-radius:3px;background:#39464f"></div>
<span class="abs" style="left:154.70px;top:621px;line-height:30px;height:30px;font-size:14px;color:#8595a0;letter-spacing:0.100px;white-space:pre;-webkit-text-stroke:.3px #8595a0;">Previous</span>
<span class="abs w" style="left:463.90px;top:621px;line-height:30px;height:30px;font-size:13px;color:#f5f8fa;letter-spacing:-0.260px;white-space:pre;">Page 1</span>
<div class="abs" style="left:711px;top:626px;width:79px;height:21px;border-radius:5px;background:#fff"></div>
<span class="abs" style="left:721.00px;top:626px;line-height:21px;height:21px;font-size:13px;color:#000;letter-spacing:0.133px;white-space:pre;">50 rows</span>
<svg class="abs" style="left:778px;top:631px" width="8" height="12" viewBox="0 0 8 12" fill="#111"><path d="M4 0L7.200 4.600H.8z"/><path d="M4 11.600L7.200 7H.8z"/></svg>
<div class="abs" style="left:896px;top:622px;width:353px;height:28px;border-radius:2px;background-image:linear-gradient(to bottom,#3d4a54,#36434e);box-shadow:0 0 0 1px rgba(16,22,26,.45)"></div>
<span class="abs w14" style="left:1057.30px;top:621px;line-height:30px;height:30px;font-size:14px;color:#f5f8fa;letter-spacing:0.167px;white-space:pre;">Next</span>
<div class="bd"></div>
</div>
</body>
</html>
